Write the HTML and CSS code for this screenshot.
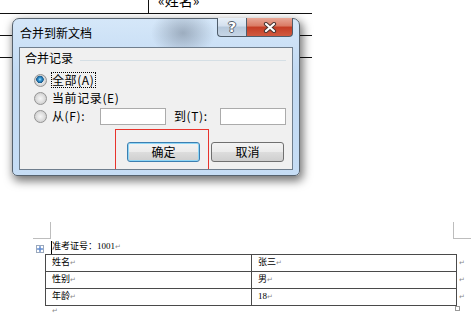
FILE: index.html
```html
<!DOCTYPE html>
<html lang="zh-CN">
<head>
    <meta charset="UTF-8">
    <title>合并到新文档</title>
    <link rel="stylesheet" href="styles.css">
</head>
<body>

    <div class="desk">
        <!-- the mail merge document behind the dialog -->
        <div class="old-doc">
            <div class="old-row old-row-first">
                <div class="old-cell-left"></div>
                <div class="old-cell"><span class="merge-field">«姓名»</span></div>
            </div>
            <div class="old-row"></div>
            <div class="old-row"></div>
        </div>

        <div class="dialog">
            <div class="titlebar">
                <span class="title">合并到新文档</span>
                <div class="caption-buttons">
                    <span class="cap-btn cap-help">?</span>
                    <span class="cap-btn cap-close">
                        <svg width="14" height="11" viewBox="0 0 14 11">
                            <path d="M3 2 L11 9 M11 2 L3 9" stroke="#4a3632" stroke-width="4.2" stroke-linecap="round"/>
                            <path d="M3 2 L11 9 M11 2 L3 9" stroke="#ffffff" stroke-width="2.2" stroke-linecap="round"/>
                        </svg>
                    </span>
                </div>
            </div>

            <div class="panel">
                <div class="group-head">
                    <span>合并记录</span>
                    <span class="group-line"></span>
                </div>

                <div class="option">
                    <span class="radio checked"></span>
                    <span class="option-text focused">全部(A)</span>
                </div>
                <div class="option">
                    <span class="radio"></span>
                    <span class="option-text">当前记录(E)</span>
                </div>
                <div class="option">
                    <span class="radio"></span>
                    <span class="option-text label-from">从(F):</span>
                    <span class="field"></span>
                    <span class="field-label">到(T):</span>
                    <span class="field"></span>
                </div>

                <div class="actions">
                    <span class="btn btn-default">确定</span>
                    <span class="btn">取消</span>
                </div>

                <!-- red annotation box -->
                <div class="mark"></div>
            </div>
        </div>
    </div>

    <div class="page">
        <div class="corners">
            <span class="corner corner-left"></span>
            <span class="corner corner-right"></span>
        </div>

        <div class="heading-line">
            <span class="move-handle">
                <svg width="8" height="8" viewBox="0 0 8 8">
                    <rect x="0.5" y="0.5" width="7" height="7" fill="#fff" stroke="#9aa8bb"/>
                    <path d="M4 1.5 V6.5 M1.5 4 H6.5" stroke="#3a6fc4" stroke-width="1"/>
                    <path d="M4 1 L3 2.2 H5 Z M4 7 L3 5.8 H5 Z M1 4 L2.2 3 V5 Z M7 4 L5.8 3 V5 Z" fill="#3a6fc4"/>
                </svg>
            </span>
            <span class="caret"></span>
            <span>准考证号：1001<span class="pm">↵</span></span>
        </div>

        <table class="info">
            <tr>
                <td class="cell-key">姓名<span class="pm">↵</span></td>
                <td class="cell-value">张三<span class="pm">↵</span></td>
                <td class="row-end"><span class="pm">↵</span></td>
            </tr>
            <tr>
                <td class="cell-key">性别<span class="pm">↵</span></td>
                <td class="cell-value">男<span class="pm">↵</span></td>
                <td class="row-end"><span class="pm">↵</span></td>
            </tr>
            <tr>
                <td class="cell-key">年龄<span class="pm">↵</span></td>
                <td class="cell-value">18<span class="pm">↵</span></td>
                <td class="row-end"><span class="pm">↵</span></td>
            </tr>
        </table>

        <div class="resize-handle"></div>
        <div class="last-line"><span class="pm">↵</span></div>
    </div>

</body>
</html>
```

FILE: styles.css
```css
body {
    margin: 0;
    width: 476px;
    height: 314px;
    overflow: hidden;
    background-color: #ffffff;
    font-family: "Noto Sans CJK SC", sans-serif;
    color: #000;
}

/* Document behind the dialog */
.desk {
    position: relative;
    height: 200px;
}

.old-doc {
    width: 312px;
}

.old-row {
    height: 21px;
    border-bottom: 1px solid #111;
}

.old-row-first {
    height: 13px;
    display: flex;
}

.old-cell-left {
    width: 148px;
    border-right: 1px solid #111;
}

.merge-field {
    display: block;
    margin-top: -7px;
    padding-left: 9px;
    font-size: 14px;
    line-height: 14px;
}

/* Dialog window */
.dialog {
    position: absolute;
    left: 12px;
    top: 18px;
    width: 288px;
    height: 158px;
    box-sizing: border-box;
    border: 1px solid #56626e;
    border-radius: 7px 7px 5px 5px;
    padding: 0 6px 5px;
    display: flex;
    flex-direction: column;
    background:
        radial-gradient(ellipse 32px 24px at 170px 14px, rgba(105, 118, 135, 0.5), rgba(105, 118, 135, 0)),
        linear-gradient(#d5e7f9, #c2daf3 35%, #c6ddf5);
    box-shadow: 2px 4px 10px 1px rgba(0, 0, 0, 0.55);
}

.titlebar {
    height: 28px;
    display: flex;
}

.title {
    font-size: 12px;
    line-height: 14px;
    padding: 7px 0 0 1px;
}

.caption-buttons {
    margin-left: auto;
    margin-top: -1px;
    display: flex;
    height: 19px;
}

.cap-btn {
    height: 19px;
    box-sizing: border-box;
    border: 1px solid #4f5d6b;
    border-top: none;
    display: flex;
    justify-content: center;
    align-items: center;
}

.cap-help {
    width: 29px;
    border-right: none;
    border-radius: 0 0 0 4px;
    background: linear-gradient(#e8f0f8, #d3e0ee 45%, #b6c8db 50%, #c7d6e6);
    color: #fff;
    font: bold 14px "DejaVu Sans", sans-serif;
    text-shadow: 1px 0 #55606c, -1px 0 #55606c, 0 1px #55606c, 0 -1px #55606c;
}

.cap-close {
    width: 47px;
    border-radius: 0 0 4px 0;
    background: linear-gradient(#e8a797, #da7a63 45%, #c43c24 50%, #d15a40);
}

/* Client area */
.panel {
    flex: 1;
    position: relative;
    overflow: hidden;
    background-color: #f0f0f0;
    border: 1px solid #6f7e8d;
    font-size: 12px;
    line-height: 14px;
}

.group-head {
    display: flex;
    align-items: center;
    height: 14px;
    margin: 3px 6px 0 5px;
}

.group-line {
    flex: 1;
    height: 1px;
    margin: 4px 0 0 7px;
    background-color: #d5dfe5;
}

.option {
    display: flex;
    align-items: center;
    height: 18px;
    padding-left: 14px;
}

.group-head + .option {
    margin-top: 6px;
}

.radio {
    width: 13px;
    height: 13px;
    box-sizing: border-box;
    border-radius: 50%;
    border: 1px solid #939393;
    background: radial-gradient(circle at 50% 50%, #f6f6f6 0, #e4e4e4 3px, #cfcfcf 6px);
}

.radio.checked {
    background:
        radial-gradient(circle at 45% 40%, #a5e6ff 0, #3a9ad6 1.5px, #175a8c 3.5px, rgba(23, 90, 140, 0) 4px),
        radial-gradient(circle at 50% 50%, #f6f6f6 0, #e4e4e4 3px, #cfcfcf 6px);
}

.option-text {
    margin-left: 5px;
    letter-spacing: 0.6px;
}

.option-text.focused {
    width: 43px;
    margin-left: 4px;
    border: 1px dotted #000;
}

.label-from {
    width: 36px;
}

.field {
    width: 66px;
    height: 17px;
    margin-left: 12px;
    box-sizing: border-box;
    border: 1px solid #ababab;
    background-color: #fff;
}

.field-label {
    width: 34px;
    margin-left: 8px;
    letter-spacing: 0.6px;
}

.actions {
    display: flex;
    gap: 11px;
    margin-top: 17px;
    padding-left: 107px;
}

.btn {
    width: 73px;
    height: 20px;
    box-sizing: border-box;
    border: 1px solid #707070;
    border-radius: 3px;
    background: linear-gradient(#f3f3f3, #ebebeb 50%, #dddddd 50%, #cfcfcf);
    display: flex;
    justify-content: center;
    align-items: center;
}

.btn-default {
    border-color: #3c7fb1;
    box-shadow: inset 0 0 0 1px #8fd6f6;
}

.mark {
    position: absolute;
    left: 95px;
    top: 81px;
    width: 94px;
    height: 60px;
    box-sizing: border-box;
    border: 1px solid #e8332c;
}

/* Page below */
.page {
    font-family: "Liberation Serif", "Noto Sans CJK SC", serif;
    font-size: 9px;
}

.corners {
    display: flex;
    justify-content: space-between;
    height: 17px;
    margin-top: 22px;
    padding: 0 5px 0 33px;
}

.corner {
    width: 17px;
    height: 16px;
    border-bottom: 1px solid #bdbdbd;
}

.corner-left {
    border-right: 1px solid #bdbdbd;
}

.corner-right {
    border-left: 1px solid #bdbdbd;
}

.heading-line {
    display: flex;
    align-items: flex-end;
    height: 13px;
    margin-top: 2px;
    line-height: 13px;
}

.move-handle {
    display: flex;
    margin: 0 0 1px 36px;
}

.caret {
    width: 1px;
    height: 13px;
    margin-left: 7px;
    background-color: #000;
}

.pm {
    font-family: "DejaVu Sans", sans-serif;
    font-size: 7px;
    color: #8a8a8a;
}

.info {
    border-collapse: collapse;
    margin-left: 45px;
}

.info td {
    height: 15px;
    padding: 0 0 0 6px;
    line-height: 15px;
    border: 1px solid #4a4a4a;
}

.info .cell-key {
    width: 199px;
}

.info .cell-value {
    width: 198px;
}

.info .row-end {
    border: none;
    padding-left: 2px;
    width: 12px;
}

.resize-handle {
    width: 3px;
    height: 3px;
    margin-left: 455px;
    border: 1px solid #9a9a9a;
}

.last-line {
    margin-top: -4px;
    padding-left: 52px;
    line-height: 7px;
}
```
